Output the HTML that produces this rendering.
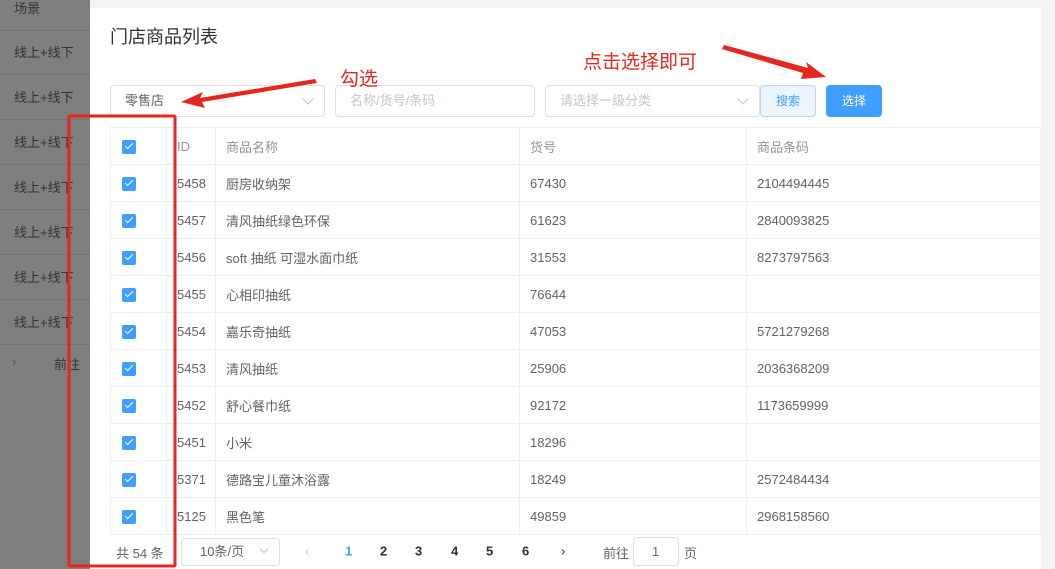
<!DOCTYPE html>
<html><head><meta charset="utf-8"><style>
*{margin:0;padding:0;box-sizing:border-box}
body{width:1055px;height:569px;overflow:hidden;background:#f3f3f3;font-family:"Liberation Sans","Noto Sans CJK SC",sans-serif;font-size:13px;color:#606266;position:relative}
.abs{position:absolute}
.left{left:0;top:0;width:90px;height:569px;background:#7f7f7f}
.lrow{position:absolute;left:0;width:90px;height:45px;border-bottom:1px solid #737373;color:#333;padding-left:14px;line-height:45px;font-size:13px}
.dlg{left:90px;top:8px;width:951px;height:561px;background:#fff}
.inp{position:absolute;height:32px;border:1px solid #dcdfe6;border-radius:4px;line-height:30px;padding-left:14px;color:#c0c4cc}
.chev{position:absolute;right:12px;top:9px;width:8px;height:8px;border-right:1px solid #c0c4cc;border-bottom:1px solid #c0c4cc;transform:rotate(45deg)}
table{position:absolute;left:110px;top:127px;width:931px;border-collapse:collapse;font-size:13px}
td{height:37px;border-bottom:1px solid #ebeef5;border-right:1px solid #ebeef5;padding-left:10px;color:#606266}
tr:first-child td{color:#909399;border-top:1px solid #ebeef5}
td:first-child{border-left:1px solid #ebeef5;padding-left:11px}
.cb{width:14px;height:14px;background:#409eff;border-radius:2px;position:relative;display:inline-block;vertical-align:middle}
.cb:after{content:"";position:absolute;left:4.5px;top:1.5px;width:3px;height:7px;border-right:1px solid #fff;border-bottom:1px solid #fff;transform:rotate(45deg)}
.red{color:#e6261f;font-size:19px}
.pg{position:absolute;top:551px;font-weight:bold;color:#303133;font-size:13px;transform:translateY(-50%)}
</style></head><body>
<div class="abs left">
<div class="lrow" style="top:-14px">场景</div>
<div class="lrow" style="top:30px">线上+线下</div>
<div class="lrow" style="top:75px">线上+线下</div>
<div class="lrow" style="top:120px">线上+线下</div>
<div class="lrow" style="top:165px">线上+线下</div>
<div class="lrow" style="top:210px">线上+线下</div>
<div class="lrow" style="top:255px">线上+线下</div>
<div class="lrow" style="top:300px">线上+线下</div>
<div class="abs" style="left:12px;top:354px;color:#555">›</div>
<div class="abs" style="left:54px;top:354px;color:#333">前往</div>
</div>
<div class="abs dlg"></div>
<div class="abs" style="left:110px;top:23px;font-size:18px;color:#303133">门店商品列表</div>
<div class="inp" style="left:110px;top:85px;width:215px;color:#606266">零售店<span class="chev"></span></div>
<div class="inp" style="left:335px;top:85px;width:200px">名称/货号/条码</div>
<div class="inp" style="left:545px;top:85px;width:215px">请选择一级分类<span class="chev"></span></div>
<div class="abs" style="left:760px;top:85px;width:56px;height:32px;border:1px solid #b3d8ff;background:#ecf5ff;color:#409eff;border-radius:4px;text-align:center;line-height:30px;font-size:12px">搜索</div>
<div class="abs" style="left:826px;top:85px;width:56px;height:32px;background:#409eff;color:#fff;border-radius:4px;text-align:center;line-height:32px;font-size:12px">选择</div>
<div class="abs red" style="left:340px;top:64px">勾选</div>
<div class="abs red" style="left:583px;top:47px">点击选择即可</div>
<table>
<colgroup><col style="width:56px"><col style="width:49px"><col style="width:304px"><col style="width:227px"><col></colgroup>
<tr><td><span class="cb"></span></td><td>ID</td><td>商品名称</td><td>货号</td><td>商品条码</td></tr>
<tr><td><span class="cb"></span></td><td>5458</td><td>厨房收纳架</td><td>67430</td><td>2104494445</td></tr>
<tr><td><span class="cb"></span></td><td>5457</td><td>清风抽纸绿色环保</td><td>61623</td><td>2840093825</td></tr>
<tr><td><span class="cb"></span></td><td>5456</td><td>soft 抽纸 可湿水面巾纸</td><td>31553</td><td>8273797563</td></tr>
<tr><td><span class="cb"></span></td><td>5455</td><td>心相印抽纸</td><td>76644</td><td></td></tr>
<tr><td><span class="cb"></span></td><td>5454</td><td>嘉乐奇抽纸</td><td>47053</td><td>5721279268</td></tr>
<tr><td><span class="cb"></span></td><td>5453</td><td>清风抽纸</td><td>25906</td><td>2036368209</td></tr>
<tr><td><span class="cb"></span></td><td>5452</td><td>舒心餐巾纸</td><td>92172</td><td>1173659999</td></tr>
<tr><td><span class="cb"></span></td><td>5451</td><td>小米</td><td>18296</td><td></td></tr>
<tr><td><span class="cb"></span></td><td>5371</td><td>德路宝儿童沐浴露</td><td>18249</td><td>2572484434</td></tr>
<tr><td><span class="cb"></span></td><td>5125</td><td>黑色笔</td><td>49859</td><td>2968158560</td></tr>
</table>
<div class="abs" style="left:116px;top:543px">共 54 条</div>
<div class="inp" style="left:181px;top:538px;width:99px;height:28px;line-height:26px;padding-left:18px;color:#606266">10条/页<span class="chev" style="top:7px;width:6px;height:6px"></span></div>
<div class="pg" style="left:305px;color:#c0c4cc;font-weight:normal">‹</div>
<div class="pg" style="left:345px;color:#409eff">1</div>
<div class="pg" style="left:380px">2</div>
<div class="pg" style="left:415px">3</div>
<div class="pg" style="left:451px">4</div>
<div class="pg" style="left:486px">5</div>
<div class="pg" style="left:522px">6</div>
<div class="pg" style="left:561px;font-weight:normal">›</div>
<div class="abs" style="left:603px;top:543px">前往</div>
<div class="inp" style="left:633px;top:537px;width:46px;height:29px;line-height:27px;padding-left:18px;color:#606266">1</div>
<div class="abs" style="left:684px;top:543px">页</div>
<svg class="abs" style="left:0;top:0;z-index:5" width="1055" height="569">
<polygon points="315,79 200,98 203,92 181,102 205,108 202,102 317,83" fill="#e6261f"/>
<polygon points="724,45 808,68 806,62 826,77 801,79 803,73 722,49" fill="#e6261f"/>
<rect x="69" y="116" width="106" height="450" fill="none" stroke="#e6261f" stroke-width="3" rx="1"/>
</svg>
</body></html>
